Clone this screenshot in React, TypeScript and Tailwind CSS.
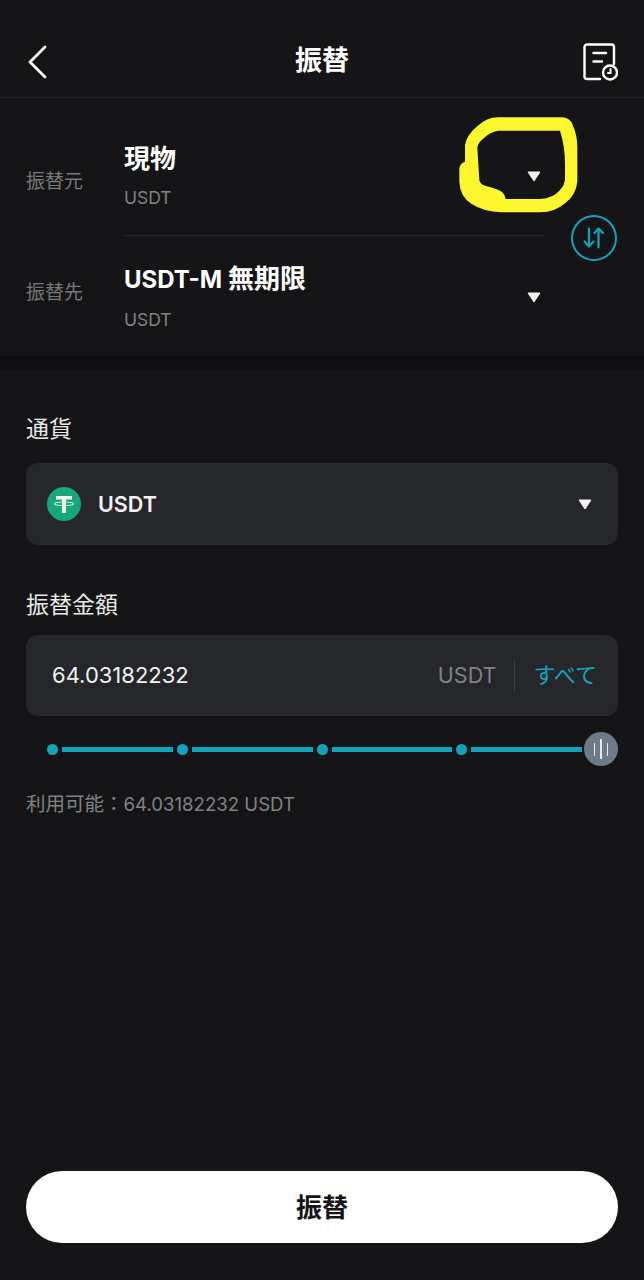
const font = "font-['Inter','Noto_Sans_CJK_JP',sans-serif]";

const Caret = () => (
  <svg width="14" height="11" viewBox="0 0 14 11" className="block">
    <path d="M1 1h12L7 10z" fill="#f2f2f2" stroke="#f2f2f2" strokeWidth="1" strokeLinejoin="round" />
  </svg>
);

const HistoryIcon = () => (
  <svg width="36" height="38" viewBox="0 0 36 38" fill="none" stroke="white" strokeWidth="2.4" strokeLinecap="round">
    <path d="M18 36H5a2.500 2.500 0 0 1-2.500-2.500V4A2.500 2.500 0 0 1 5 1.500h24.500A2.500 2.500 0 0 1 32 4v17" />
    <path d="M11.500 10H24M11.500 18.500H20" />
    <circle cx="28" cy="29.500" r="7" />
    <path d="M28.500 26v4h-2.500" strokeWidth="2" />
  </svg>
);

const TetherIcon = () => (
  <svg width="34" height="34" viewBox="0 0 34 34" className="shrink-0">
    <circle cx="17" cy="17" r="17" fill="#15a87e" />
    <path d="M9 9h16v3.600h-6V26h-4V12.600H9z" fill="#f4f4f4" />
    <ellipse cx="17" cy="16.800" rx="10" ry="1.800" fill="none" stroke="#d8efe7" strokeWidth="1" />
  </svg>
);

const SwapIcon = () => (
  <div className="w-[46px] h-[46px] rounded-full border-[2.5px] border-[#12a4bd] flex items-center justify-center bg-[#151517]">
    <svg width="24" height="24" viewBox="0 0 24 24" fill="none" stroke="#12a4bd" strokeWidth="2.2" strokeLinecap="round" strokeLinejoin="round">
      <path d="M7 2.500v18M2.500 15.500 7 20.500l4.500-5" />
      <path d="M16.500 21.500v-19M12.500 7l4-4.500 4.500 4.500" />
    </svg>
  </div>
);

const Scribble = () => (
  <svg
    width="204"
    height="220"
    viewBox="0 0 612 660"
    className="absolute left-[440px] top-[100px] pointer-events-none"
  >
    <path
      fillRule="evenodd"
      fill="#fcf62f"
      d="M175 52H365Q390 52 398 75Q412 105 412 140V245Q408 285 375 310Q345 337 300 337H185Q130 335 95 312Q60 290 58 245V205Q60 190 75 185V135Q80 105 110 80Q140 52 175 52ZM175 92Q150 95 125 120Q112 132 112 145L118 240Q120 252 135 257Q165 265 180 272Q195 280 197 297H300Q340 295 360 270Q375 255 375 235V190Q375 140 360 92Z"
    />
  </svg>
);

const Row = ({
  label,
  labelClass,
  blockClass,
  caretClass,
  subClass,
  children,
}: {
  label: string;
  labelClass: string;
  blockClass: string;
  caretClass: string;
  subClass: string;
  children: React.ReactNode;
}) => (
  <div className="flex items-center h-full">
    <span className={`w-[98px] text-[19px] text-[#77787a] ${labelClass}`}>{label}</span>
    <div className={`flex-1 flex items-center justify-between ${blockClass}`}>
      <div>
        <div className="font-bold text-white leading-[32px]">{children}</div>
        <div className={`text-[17.5px] text-[#818285] leading-6 ${subClass}`}>USDT</div>
      </div>
      <div className={`mr-[3px] ${caretClass}`}>
        <Caret />
      </div>
    </div>
  </div>
);

const Dot = () => <div className="w-[11px] h-[11px] rounded-full bg-[#12a4bd] shrink-0" />;

const App = () => {
  return (
    <div className={`relative w-[644px] h-[1280px] bg-[#151517] overflow-hidden ${font}`}>
      <header className="h-[98px] pt-[26px] px-[26px] flex items-center justify-between border-b border-[#252628]">
        <div className="w-[36px]">
          <svg width="22" height="34" viewBox="0 0 22 34" fill="none" stroke="white" strokeWidth="2.800" strokeLinecap="round" strokeLinejoin="round" className="block">
            <path d="M19 2 4 17l15 15" />
          </svg>
        </div>
        <h1 className="text-[27px] font-bold text-white">振替</h1>
        <HistoryIcon />
      </header>

      <section className="relative h-[258px] pl-[26px] pr-[100px] pt-[15px]">
        <div className="h-[122px]">
          <Row label="振替元" labelClass="mt-[16px]" blockClass="mt-[5px]" caretClass="-mt-[1px]" subClass="mt-[8px]">
            <span className="text-[26px]">現物</span>
          </Row>
        </div>
        <div className="ml-[98px] border-t border-[#252628]" />
        <div className="h-[112px]">
          <Row label="振替先" labelClass="mt-[2px]" blockClass="mt-[11px]" caretClass="" subClass="mt-[10px]">
            <span className="text-[24px]">USDT-M </span>
            <span className="text-[26px]">無期限</span>
          </Row>
        </div>
        <div className="absolute right-[27px] top-[117px]">
          <SwapIcon />
        </div>
      </section>

      <div className="h-[14px] bg-[#0f0f11]" />

      <main className="px-[26px]">
        <h2 className="text-[23px] text-[#e8e8e8] leading-[30px] mt-[44px]">通貨</h2>
        <div className="mt-[19px] h-[82px] rounded-xl bg-[#26272b] flex items-center pl-[21px] pr-[26px]">
          <TetherIcon />
          <span className="ml-[17px] text-[21.5px] font-semibold text-[#f2f2f2]">USDT</span>
          <div className="ml-auto">
            <Caret />
          </div>
        </div>

        <h2 className="text-[23px] text-[#e8e8e8] leading-[30px] mt-[45px]">振替金額</h2>
        <div className="mt-[15px] h-[81px] rounded-xl bg-[#26272b] flex items-center pl-[26px] pr-[21px]">
          <span className="text-[22px] text-[#f2f2f2]">64.03182232</span>
          <span className="ml-auto text-[21.5px] text-[#818285]">USDT</span>
          <div className="w-px h-[34px] bg-[#3b3c40] mx-[18px]" />
          <span className="text-[22px] text-[#12a4bd]">すべて</span>
        </div>

        <div className="mt-[16px] h-[34px] flex items-center pl-[21px]">
          <Dot />
          <div className="ml-[4px] w-[111px] h-[5px] bg-[#12a4bd]" />
          <div className="ml-[4px]">
            <Dot />
          </div>
          <div className="ml-[4px] w-[121px] h-[5px] bg-[#12a4bd]" />
          <div className="ml-[4px]">
            <Dot />
          </div>
          <div className="ml-[4px] w-[121px] h-[5px] bg-[#12a4bd]" />
          <div className="ml-[4px]">
            <Dot />
          </div>
          <div className="ml-[4px] w-[111px] h-[5px] bg-[#12a4bd]" />
          <div className="ml-[2px] w-[34px] h-[34px] rounded-full bg-[#6f7a88] flex items-center justify-center gap-[5px] shrink-0">
            <div className="w-[1.500px] h-[13px] bg-[#e8e8e8]" />
            <div className="w-[1.500px] h-[20px] bg-[#e8e8e8]" />
            <div className="w-[1.500px] h-[13px] bg-[#e8e8e8]" />
          </div>
        </div>

        <p className="mt-[26px] leading-6 text-[#818285] whitespace-nowrap">
          <span className="text-[19.5px]">利用可能：</span>
          <span className="text-[18.6px]">64.03182232 USDT</span>
        </p>
      </main>

      <div className="absolute left-[26px] right-[26px] bottom-[37px]">
        <button className="w-full h-[72px] rounded-full bg-white text-[26px] font-bold text-[#151517]">振替</button>
      </div>

      <Scribble />
    </div>
  );
};

export default App;
